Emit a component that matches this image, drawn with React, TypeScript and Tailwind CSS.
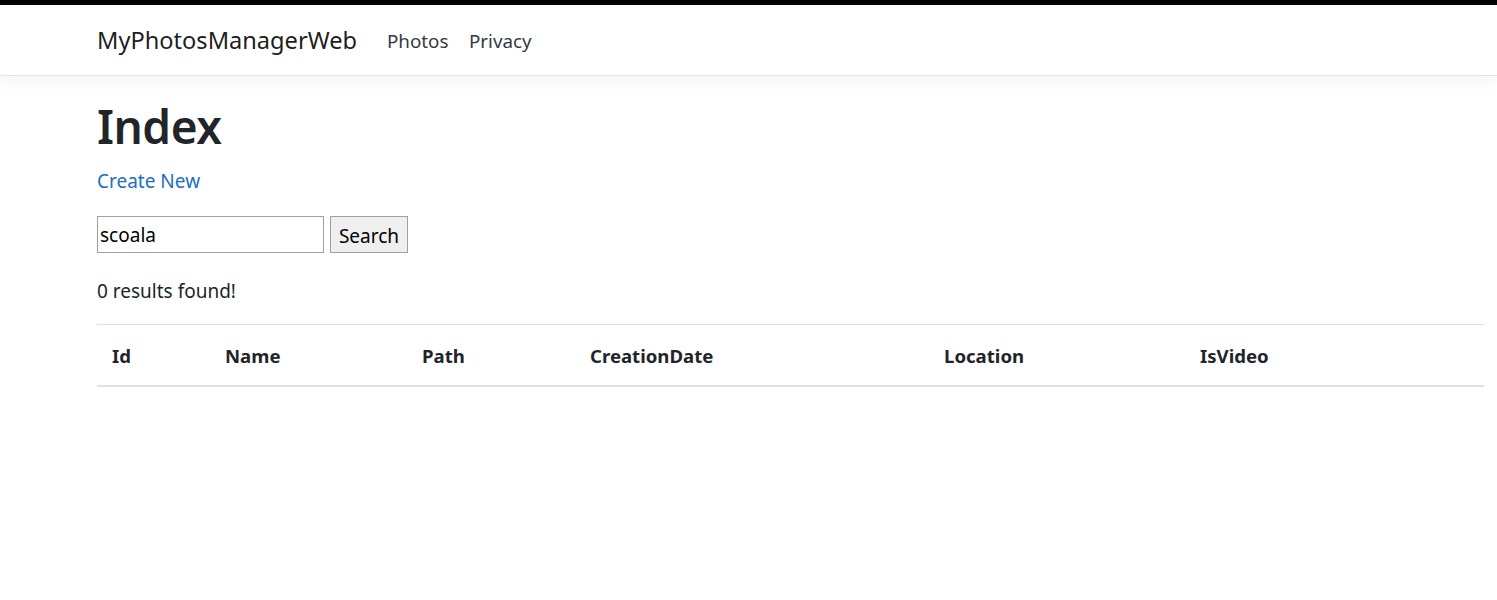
import React from "react";

export default function App() {
  const font = { fontFamily: '"Noto Sans", "Open Sans", sans-serif' };
  const th = "border-t border-b-2 border-[#dee2e6] px-[15px] pt-[16px] pb-[14px] font-bold leading-[30px]";
  return (
    <div className="min-h-[600px] bg-white text-[#212529]" style={font}>
      <div className="h-[5px] bg-black" />
      <nav className="h-[71px] border-b border-[#e5e5e5] bg-white shadow-[0_5px_15px_rgba(0,0,0,0.05)]">
        <div className="flex h-[70px] items-center pl-[97px] pt-[2px]">
          <span className="w-[280px] whitespace-nowrap text-[23.6px] text-[rgba(0,0,0,0.9)]">MyPhotosManagerWeb</span>
          <span className="w-[82px] whitespace-nowrap px-[10px] text-[18.8px] text-[#343a40]">Photos</span>
          <span className="px-[10px] whitespace-nowrap text-[18.8px] text-[#343a40]">Privacy</span>
        </div>
      </nav>
      <main className="pl-[97px] pr-[13px] pt-[20px]">
        <h1 className="mb-[10px] text-[46px] font-semibold leading-[60px] tracking-[-0.5px]">Index</h1>
        <p className="mb-[20px] text-[19px] leading-[30px]">
          <a href="#" className="text-[#1b6ec2]">Create New</a>
        </p>
        <form className="flex h-[37px] items-stretch gap-[6px]" onSubmit={(e) => e.preventDefault()}>
          <input
            defaultValue="scoala"
            className="w-[227px] border border-[#a0a0a0] px-[2px] pt-[1px] text-[19px] text-black outline-none"
          />
          <button
            type="button"
            className="w-[78px] border border-[#a0a0a0] bg-[#efefef] pt-[3px] text-[19px] text-black"
          >
            Search
          </button>
        </form>
        <p className="mt-[23px] mb-[18px] text-[19px] leading-[30px]">0 results found!</p>
        <table className="w-full border-collapse text-left text-[18.6px]">
          <thead>
            <tr>
              <th className={`w-[113px] ${th}`}>Id</th>
              <th className={`w-[197px] ${th}`}>Name</th>
              <th className={`w-[168px] ${th}`}>Path</th>
              <th className={`w-[354px] ${th}`}>CreationDate</th>
              <th className={`w-[256px] ${th}`}>Location</th>
              <th className={`w-[150px] ${th}`}>IsVideo</th>
              <th className={th}></th>
            </tr>
          </thead>
          <tbody></tbody>
        </table>
      </main>
    </div>
  );
}
